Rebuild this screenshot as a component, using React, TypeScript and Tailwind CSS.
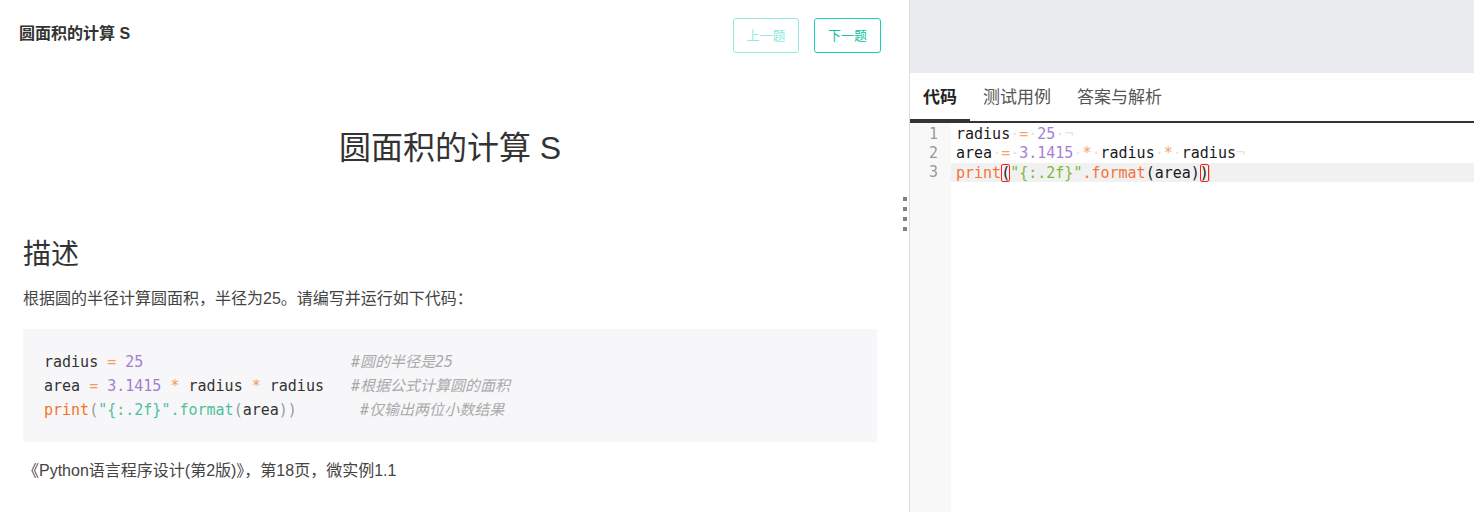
const sans = { fontFamily: '"Liberation Sans", "Noto Sans CJK SC", sans-serif' };
const mono = { fontFamily: '"DejaVu Sans Mono", "Noto Sans CJK SC", monospace' };

const Ws = () => <span className="text-[#e4e4e4]">·</span>;

function ProblemPanel() {
  return (
    <div className="w-[910px] shrink-0 border-r border-[#dddddd] text-[#333]" style={sans}>
      <div className="flex items-center justify-between pl-[19px] pr-[28px] pt-[18px]">
        <div className="text-[16px] font-bold text-[#333] -mt-[3px]">圆面积的计算 S</div>
        <div className="flex gap-[15px]">
          <button className="h-[35px] w-[66px] rounded-[3px] border border-[#93eadb] text-[13px] text-[#93eadb]">
            上一题
          </button>
          <button className="h-[35px] w-[67px] rounded-[3px] border border-[#19d2b2] text-[13px] text-[#19c2a4]">
            下一题
          </button>
        </div>
      </div>

      <div className="pl-[23px] pr-[32px]">
        <h1 className="mt-[71px] text-center text-[32px] leading-[48px] font-normal">圆面积的计算 S</h1>
        <h2 className="mt-[63px] text-[28px] leading-[40px] font-normal">描述</h2>
        <p className="mt-[12px] text-[16px] leading-[24px] text-[#444]">
          根据圆的半径计算圆面积，半径为25。请编写并运行如下代码：
        </p>

        <pre
          className="mt-[18px] bg-[#f7f7f9] pl-[21px] pt-[21px] pb-[20px] text-[15px] leading-[24px] text-[#333] whitespace-pre"
          style={mono}
        >
          <div>
            radius <span className="text-[#f59b5b]">=</span> <span className="text-[#a57ed1]">25</span>
            {'                       '}
            <span className="italic text-[#aaa]">#圆的半径是25</span>
          </div>
          <div>
            area <span className="text-[#f59b5b]">=</span> <span className="text-[#a57ed1]">3.1415</span>{' '}
            <span className="text-[#f59b5b]">*</span> radius <span className="text-[#f59b5b]">*</span> radius{'   '}
            <span className="italic text-[#aaa]">#根据公式计算圆的面积</span>
          </div>
          <div>
            <span className="text-[#f5741f]">print</span>
            <span className="text-[#999]">(</span>
            <span className="text-[#4fbf9b]">"{'{:.2f}'}"</span>
            <span className="text-[#4fbf9b]">.format</span>
            <span className="text-[#999]">(</span>area<span className="text-[#999]">))</span>
            {'       '}
            <span className="italic text-[#aaa]">#仅输出两位小数结果</span>
          </div>
        </pre>

        <p className="mt-[17px] text-[16px] leading-[24px] text-[#444]">《Python语言程序设计(第2版)》，第18页，微实例1.1</p>
      </div>
    </div>
  );
}

function EditorPanel() {
  const tabs = ['代码', '测试用例', '答案与解析'];
  return (
    <div className="flex min-w-0 flex-1 flex-col" style={sans}>
      <div className="h-[73px] bg-[#e9ebee]" />
      <div className="flex h-[50px] border-b-2 border-[#333]">
        {tabs.map((t, i) => (
          <div
            key={t}
            className={
              i === 0
                ? 'flex items-center px-[13px] pt-[2px] text-[17px] font-bold text-[#222] shadow-[inset_0_-2px_0_#333]'
                : 'flex items-center px-[13px] pt-[2px] text-[17px] text-[#555]'
            }
          >
            {t}
          </div>
        ))}
      </div>

      <div className="flex flex-1 text-[15px] leading-[19px]" style={mono}>
        <div className="w-[41px] shrink-0 bg-[#f8f8f8] pt-[2px] pr-[13px] text-right text-[#999]">
          <div>1</div>
          <div>2</div>
          <div>3</div>
        </div>
        <div className="flex-1 pt-[1px] text-[#1a1a1a] whitespace-pre">
          <div className="pl-[5px] pt-[1px] -mb-[1px]">
            radius<Ws /><span className="text-[#f5a26b]">=</span><Ws />
            <span className="text-[#a67fd4]">25</span><Ws />
            <span className="text-[#e4e4e4]">¬</span>
          </div>
          <div className="pl-[5px] pt-[1px] -mb-[1px]">
            area<Ws /><span className="text-[#f5a26b]">=</span><Ws />
            <span className="text-[#a67fd4]">3.1415</span><Ws />
            <span className="text-[#f5a26b]">*</span><Ws />radius<Ws />
            <span className="text-[#f5a26b]">*</span><Ws />radius
            <span className="text-[#e4e4e4]">¬</span>
          </div>
          <div className="mt-[1px] h-[19px] bg-[#f1f1f1] pl-[5px] pt-[1px]">
            <span className="text-[#f4733d]">print</span>
            <span className="rounded-[2px] outline outline-1 -outline-offset-1 outline-[#ff1a1a]">(</span>
            <span className="text-[#7fb93a]">"{'{:.2f}'}"</span>
            <span className="text-[#f4733d]">.format</span>(area)
            <span className="rounded-[2px] outline outline-1 -outline-offset-1 outline-[#ff1a1a]">)</span>
            <span className="inline-block h-[17px] w-[1px] bg-[#f7c9b5] align-middle" />
          </div>
        </div>
      </div>
    </div>
  );
}

export default function App() {
  return (
    <div className="relative flex h-[512px] w-[1474px] overflow-hidden bg-white">
      <ProblemPanel />
      <EditorPanel />
      <div className="absolute left-[903px] top-[197px] flex flex-col gap-[6px]">
        <div className="h-[4px] w-[4px] bg-[#808080]" />
        <div className="h-[4px] w-[4px] bg-[#808080]" />
        <div className="h-[4px] w-[4px] bg-[#808080]" />
        <div className="h-[4px] w-[4px] bg-[#808080]" />
      </div>
    </div>
  );
}
